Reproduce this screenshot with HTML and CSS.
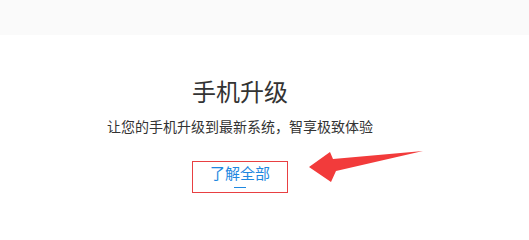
FILE: index.html
```html
<!DOCTYPE html>
<html lang="zh-CN">
<head>
<meta charset="utf-8">
<title>手机升级</title>
<link rel="stylesheet" href="styles.css">
</head>
<body>
<div class="topbar"></div>
<main class="content">
  <h1 class="title">手机升级</h1>
  <p class="subtitle">让您的手机升级到最新系统，智享极致体验</p>
  <a class="more" href="#">
    <span class="more-text">了解全部</span>
    <span class="more-dash"></span>
  </a>
</main>
<svg class="arrow" width="529" height="213" viewBox="0 0 529 213" aria-hidden="true">
  <polygon points="309,167 330,152 333,159 423,151 336,171 331,182" fill="#f23b3b"/>
</svg>
</body>
</html>
```
FILE: styles.css
```css
html, body {
  margin: 0;
  padding: 0;
  background: #ffffff;
}
body {
  font-family: "Noto Sans CJK SC", "Noto Sans", sans-serif;
  color: #333333;
  position: relative;
  width: 529px;
  height: 213px;
  overflow: hidden;
}
.topbar {
  height: 35px;
  background: #fafafa;
}
.content {
  width: 480px;
  text-align: center;
  display: flex;
  flex-direction: column;
  align-items: center;
}
.title {
  margin: 44px 0 0;
  font-size: 24px;
  line-height: 24px;
  font-weight: normal;
  color: #333333;
}
.subtitle {
  margin: 13px 0 0;
  font-size: 14px;
  line-height: 20px;
  color: #333333;
}
.more {
  margin-top: 25px;
  box-sizing: border-box;
  width: 96px;
  height: 32px;
  border: 1px solid #e84042;
  padding-top: 3px;
  display: flex;
  flex-direction: column;
  align-items: center;
  text-decoration: none;
  color: #1e88e0;
}
.more-text {
  font-size: 15px;
  line-height: 15px;
}
.more-dash {
  margin-top: 7px;
  width: 12px;
  height: 1px;
  background: #1e88e0;
}
.arrow {
  position: absolute;
  left: 0;
  top: 0;
  pointer-events: none;
}
```
